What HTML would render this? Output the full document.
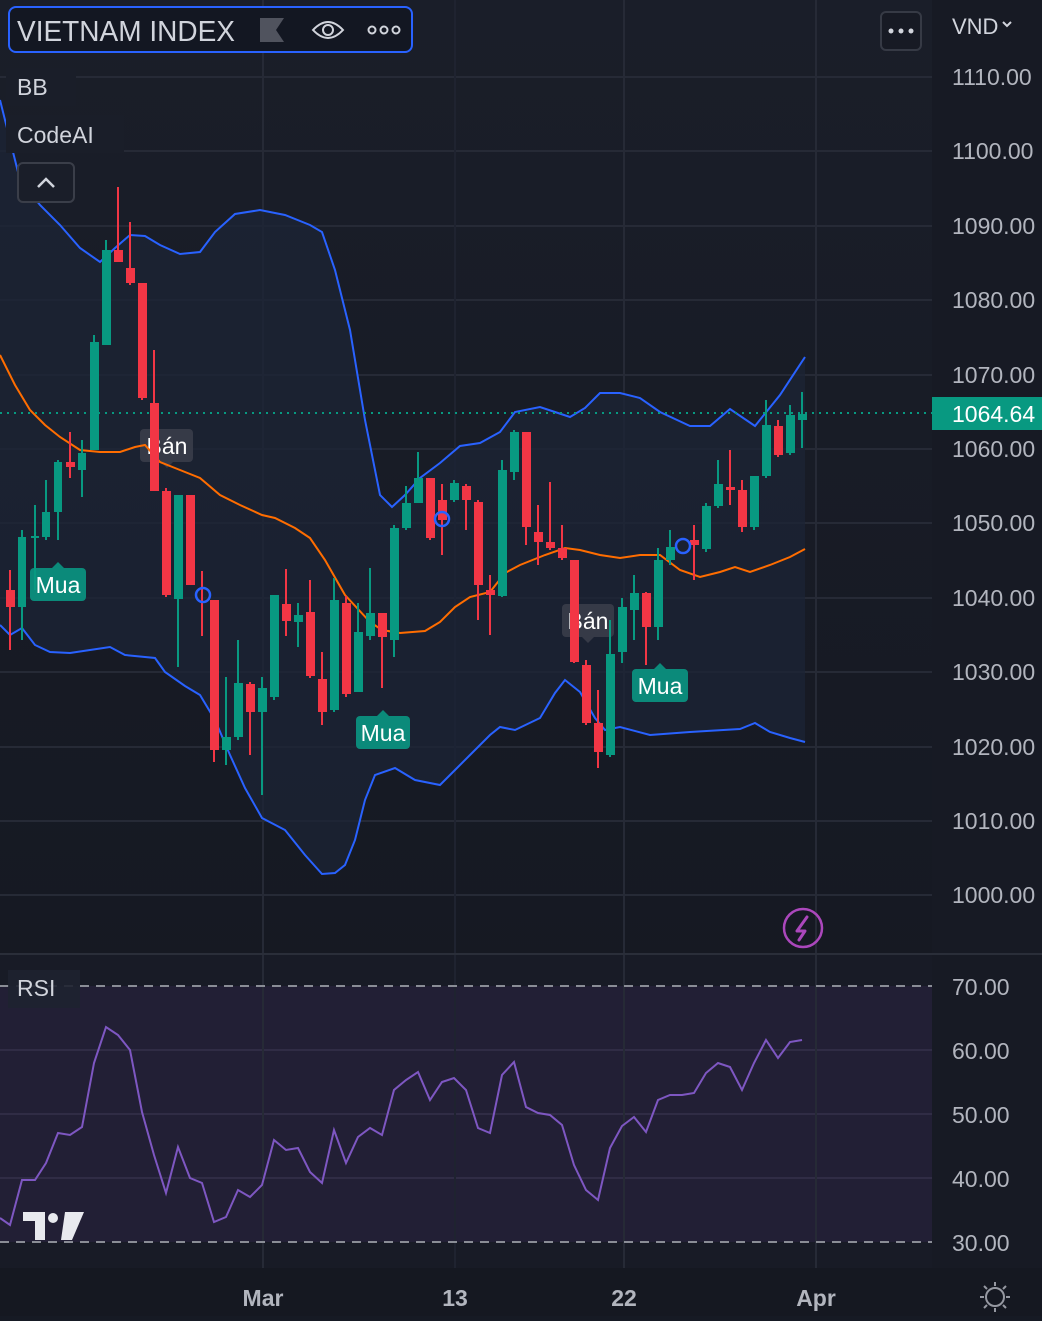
<!DOCTYPE html>
<html><head><meta charset="utf-8"><style>
html,body{margin:0;padding:0;background:#161a24;}
body{width:1042px;height:1316px;overflow:hidden;font-family:"Liberation Sans","DejaVu Sans",sans-serif;}
svg text{font-family:"Liberation Sans","DejaVu Sans",sans-serif;}
</style></head><body>
<svg width="1042" height="1316" viewBox="0 0 1042 1316" xmlns="http://www.w3.org/2000/svg">
<defs>
<linearGradient id="bg" x1="0" y1="0" x2="0" y2="1"><stop offset="0" stop-color="#1a1e29"/><stop offset="1" stop-color="#141720"/></linearGradient>
</defs>
<rect x="0" y="0" width="1042" height="1316" fill="url(#bg)"/>
<rect x="0" y="954" width="932" height="314" fill="#181b26"/>
<rect x="0" y="986" width="932" height="256" fill="#221f35"/>
<rect x="932" y="0" width="110" height="1316" fill="#171a24"/>
<rect x="0" y="1268" width="1042" height="48" fill="#151821"/>
<!-- grid -->
<g stroke="#262a36" stroke-width="2">
<line x1="0" y1="77" x2="932" y2="77"/><line x1="0" y1="151" x2="932" y2="151"/><line x1="0" y1="226" x2="932" y2="226"/><line x1="0" y1="300" x2="932" y2="300"/><line x1="0" y1="375" x2="932" y2="375"/><line x1="0" y1="449" x2="932" y2="449"/><line x1="0" y1="523" x2="932" y2="523"/><line x1="0" y1="598" x2="932" y2="598"/><line x1="0" y1="672" x2="932" y2="672"/><line x1="0" y1="747" x2="932" y2="747"/><line x1="0" y1="821" x2="932" y2="821"/><line x1="0" y1="895" x2="932" y2="895"/>
<line x1="0" y1="1050" x2="932" y2="1050" stroke="#302c45"/><line x1="0" y1="1114" x2="932" y2="1114" stroke="#302c45"/><line x1="0" y1="1178" x2="932" y2="1178" stroke="#302c45"/>
<line x1="263" y1="0" x2="263" y2="1268"/><line x1="455" y1="0" x2="455" y2="1268" stroke="#1f2330"/><line x1="624" y1="0" x2="624" y2="1268"/><line x1="816" y1="0" x2="816" y2="1268"/>
</g>
<line x1="0" y1="954" x2="1042" y2="954" stroke="#2a2e39" stroke-width="2"/>
<!-- BB fill -->
<polygon fill="#1c2436" opacity="0.75" points="0,100 20,180 40,205 60,225 80,248 100,262 115,248 130,235 145,236 160,245 180,254 200,252 215,232 235,214 260,210 285,215 310,225 322,232 335,270 350,330 365,420 380,495 392,507 405,495 420,478 440,463 460,446 480,443 500,432 515,412 540,407 555,412 570,417 585,408 600,393 620,393 640,398 660,412 690,426 710,426 730,409 755,426 780,395 805,357 805,742 790,738 770,732 755,723 740,729 690,732 650,735 620,727 605,730 595,718 580,692 565,680 555,693 540,718 515,730 500,727 490,735 470,755 455,770 440,785 415,780 395,768 375,775 365,800 355,840 345,865 335,873 322,874 305,855 285,830 262,818 245,788 230,755 215,720 200,695 185,686 165,672 155,658 125,655 110,647 90,650 70,653 50,652 35,645 22,628 10,635 0,625"/>
<!-- labels under candles -->
<g font-size="23" >
<rect x="30" y="568" width="56" height="33" rx="4" fill="#0b8a7a"/><polygon points="52,568 58,562 64,568" fill="#0b8a7a"/><text x="58" y="593" fill="#fff" text-anchor="middle">Mua</text>
<rect x="356" y="716" width="54" height="33" rx="4" fill="#0b8a7a"/><polygon points="377,716 383,710 389,716" fill="#0b8a7a"/><text x="383" y="741" fill="#fff" text-anchor="middle">Mua</text>
<rect x="632" y="669" width="56" height="33" rx="4" fill="#0b8a7a"/><polygon points="654,669 660,663 666,669" fill="#0b8a7a"/><text x="660" y="694" fill="#fff" text-anchor="middle">Mua</text>
<rect x="140" y="429" width="53" height="33" rx="4" fill="#363a47"/><polygon points="161,462 167,468 173,462" fill="#363a47"/><text x="167" y="454" fill="#fff" text-anchor="middle">Bán</text>
<rect x="562" y="604" width="52" height="33" rx="4" fill="#363a47"/><polygon points="582,637 588,643 594,637" fill="#363a47"/><text x="588" y="629" fill="#fff" text-anchor="middle">Bán</text>
</g>
<!-- BB lines -->
<polyline fill="none" stroke="#2962ff" stroke-width="2" points="0,100 20,180 40,205 60,225 80,248 100,262 115,248 130,235 145,236 160,245 180,254 200,252 215,232 235,214 260,210 285,215 310,225 322,232 335,270 350,330 365,420 380,495 392,507 405,495 420,478 440,463 460,446 480,443 500,432 515,412 540,407 555,412 570,417 585,408 600,393 620,393 640,398 660,412 690,426 710,426 730,409 755,426 780,395 805,357"/>
<polyline fill="none" stroke="#2962ff" stroke-width="2" points="0,625 10,635 22,628 35,645 50,652 70,653 90,650 110,647 125,655 155,658 165,672 185,686 200,695 215,720 230,755 245,788 262,818 285,830 305,855 322,874 335,873 345,865 355,840 365,800 375,775 395,768 415,780 440,785 455,770 470,755 490,735 500,727 515,730 540,718 555,693 565,680 580,692 595,718 605,730 620,727 650,735 690,732 740,729 755,723 770,732 790,738 805,742"/>
<polyline fill="none" stroke="#ff6d00" stroke-width="2" points="0,355 15,385 30,410 45,425 60,437 80,450 100,452 120,452 135,447 145,445 160,462 180,470 200,478 220,495 240,505 262,515 275,518 295,528 310,538 325,560 345,595 370,622 382,630 400,633 425,631 440,622 455,607 470,597 490,592 505,573 520,565 545,555 565,548 580,550 600,555 620,558 640,555 660,555 680,570 700,577 720,572 735,567 750,572 770,565 790,557 805,549"/>
<line x1="0" y1="413" x2="932" y2="413" stroke="#089981" stroke-width="2" stroke-dasharray="2,5"/>
<!-- green candles -->
<g fill="#089981" stroke="#089981" stroke-width="2">
<line x1="22" y1="530" x2="22" y2="640"/><rect x="18" y="537" width="8" height="70" stroke="none"/>
<line x1="35" y1="505" x2="35" y2="590"/><rect x="31" y="536" width="8" height="2" stroke="none"/>
<line x1="46" y1="480" x2="46" y2="540"/><rect x="42" y="512" width="8" height="25" stroke="none"/>
<line x1="58" y1="460" x2="58" y2="540"/><rect x="54" y="462" width="8" height="50" stroke="none"/>
<line x1="82" y1="440" x2="82" y2="497"/><rect x="78" y="453" width="8" height="17" stroke="none"/>
<line x1="94" y1="335" x2="94" y2="450"/><rect x="90" y="342" width="9" height="108" stroke="none"/>
<line x1="106" y1="240" x2="106" y2="345"/><rect x="102" y="250" width="9" height="95" stroke="none"/>
<line x1="178" y1="495" x2="178" y2="667"/><rect x="174" y="495" width="9" height="104" stroke="none"/>
<line x1="226" y1="677" x2="226" y2="765"/><rect x="222" y="737" width="9" height="13" stroke="none"/>
<line x1="238" y1="640" x2="238" y2="740"/><rect x="234" y="683" width="9" height="54" stroke="none"/>
<line x1="262" y1="677" x2="262" y2="795"/><rect x="258" y="688" width="9" height="24" stroke="none"/>
<line x1="274" y1="595" x2="274" y2="700"/><rect x="270" y="595" width="9" height="102" stroke="none"/>
<line x1="298" y1="603" x2="298" y2="647"/><rect x="294" y="615" width="9" height="7" stroke="none"/>
<line x1="334" y1="578" x2="334" y2="712"/><rect x="330" y="600" width="9" height="110" stroke="none"/>
<line x1="358" y1="603" x2="358" y2="692"/><rect x="354" y="632" width="9" height="60" stroke="none"/>
<line x1="370" y1="568" x2="370" y2="640"/><rect x="366" y="613" width="9" height="23" stroke="none"/>
<line x1="394" y1="525" x2="394" y2="657"/><rect x="390" y="528" width="9" height="112" stroke="none"/>
<line x1="406" y1="486" x2="406" y2="530"/><rect x="402" y="503" width="9" height="25" stroke="none"/>
<line x1="418" y1="452" x2="418" y2="503"/><rect x="414" y="478" width="9" height="25" stroke="none"/>
<line x1="454" y1="480" x2="454" y2="502"/><rect x="450" y="483" width="9" height="17" stroke="none"/>
<line x1="502" y1="460" x2="502" y2="597"/><rect x="498" y="470" width="9" height="126" stroke="none"/>
<line x1="514" y1="430" x2="514" y2="480"/><rect x="510" y="432" width="9" height="40" stroke="none"/>
<line x1="610" y1="620" x2="610" y2="757"/><rect x="606" y="654" width="9" height="101" stroke="none"/>
<line x1="622" y1="598" x2="622" y2="663"/><rect x="618" y="607" width="9" height="45" stroke="none"/>
<line x1="634" y1="575" x2="634" y2="640"/><rect x="630" y="593" width="9" height="17" stroke="none"/>
<line x1="658" y1="548" x2="658" y2="640"/><rect x="654" y="560" width="9" height="67" stroke="none"/>
<line x1="670" y1="530" x2="670" y2="565"/><rect x="666" y="547" width="9" height="13" stroke="none"/>
<line x1="706" y1="503" x2="706" y2="552"/><rect x="702" y="506" width="9" height="43" stroke="none"/>
<line x1="718" y1="460" x2="718" y2="508"/><rect x="714" y="484" width="9" height="22" stroke="none"/>
<line x1="754" y1="476" x2="754" y2="530"/><rect x="750" y="476" width="9" height="51" stroke="none"/>
<line x1="766" y1="400" x2="766" y2="478"/><rect x="762" y="425" width="9" height="51" stroke="none"/>
<line x1="790" y1="405" x2="790" y2="455"/><rect x="786" y="415" width="9" height="38" stroke="none"/>
<line x1="802" y1="392" x2="802" y2="448"/><rect x="798" y="414" width="9" height="6" stroke="none"/>
</g>
<!-- red candles -->
<g fill="#f23645" stroke="#f23645" stroke-width="2">
<line x1="10" y1="570" x2="10" y2="650"/><rect x="6" y="590" width="9" height="17" stroke="none"/>
<line x1="70" y1="432" x2="70" y2="478"/><rect x="66" y="462" width="9" height="5" stroke="none"/>
<line x1="118" y1="187" x2="118" y2="262"/><rect x="114" y="250" width="9" height="12" stroke="none"/>
<line x1="130" y1="222" x2="130" y2="285"/><rect x="126" y="268" width="9" height="15" stroke="none"/>
<line x1="142" y1="283" x2="142" y2="400"/><rect x="138" y="283" width="9" height="115" stroke="none"/>
<line x1="154" y1="350" x2="154" y2="491"/><rect x="150" y="403" width="9" height="88" stroke="none"/>
<line x1="166" y1="488" x2="166" y2="597"/><rect x="162" y="491" width="9" height="104" stroke="none"/>
<line x1="190" y1="495" x2="190" y2="585"/><rect x="186" y="495" width="9" height="90" stroke="none"/>
<line x1="202" y1="571" x2="202" y2="636"/>
<line x1="214" y1="600" x2="214" y2="762"/><rect x="210" y="600" width="9" height="150" stroke="none"/>
<line x1="250" y1="682" x2="250" y2="755"/><rect x="246" y="684" width="9" height="28" stroke="none"/>
<line x1="286" y1="569" x2="286" y2="636"/><rect x="282" y="604" width="9" height="17" stroke="none"/>
<line x1="310" y1="580" x2="310" y2="678"/><rect x="306" y="612" width="9" height="64" stroke="none"/>
<line x1="322" y1="652" x2="322" y2="725"/><rect x="318" y="679" width="9" height="33" stroke="none"/>
<line x1="346" y1="596" x2="346" y2="697"/><rect x="342" y="603" width="9" height="91" stroke="none"/>
<line x1="382" y1="613" x2="382" y2="688"/><rect x="378" y="613" width="9" height="24" stroke="none"/>
<line x1="430" y1="478" x2="430" y2="540"/><rect x="426" y="478" width="9" height="60" stroke="none"/>
<line x1="442" y1="484" x2="442" y2="555"/><rect x="438" y="500" width="9" height="20" stroke="none"/>
<line x1="466" y1="484" x2="466" y2="530"/><rect x="462" y="486" width="9" height="14" stroke="none"/>
<line x1="478" y1="500" x2="478" y2="620"/><rect x="474" y="502" width="9" height="83" stroke="none"/>
<line x1="490" y1="575" x2="490" y2="635"/><rect x="486" y="590" width="9" height="5" stroke="none"/>
<line x1="526" y1="432" x2="526" y2="545"/><rect x="522" y="432" width="9" height="95" stroke="none"/>
<line x1="538" y1="505" x2="538" y2="565"/><rect x="534" y="532" width="9" height="10" stroke="none"/>
<line x1="550" y1="482" x2="550" y2="550"/><rect x="546" y="542" width="9" height="6" stroke="none"/>
<line x1="562" y1="525" x2="562" y2="560"/><rect x="558" y="548" width="9" height="10" stroke="none"/>
<line x1="574" y1="560" x2="574" y2="663"/><rect x="570" y="560" width="9" height="102" stroke="none"/>
<line x1="586" y1="660" x2="586" y2="725"/><rect x="582" y="665" width="9" height="58" stroke="none"/>
<line x1="598" y1="690" x2="598" y2="768"/><rect x="594" y="723" width="9" height="29" stroke="none"/>
<line x1="646" y1="592" x2="646" y2="665"/><rect x="642" y="593" width="9" height="34" stroke="none"/>
<line x1="694" y1="525" x2="694" y2="580"/><rect x="690" y="540" width="9" height="5" stroke="none"/>
<line x1="730" y1="450" x2="730" y2="505"/><rect x="726" y="487" width="9" height="3" stroke="none"/>
<line x1="742" y1="480" x2="742" y2="532"/><rect x="738" y="490" width="9" height="37" stroke="none"/>
<line x1="778" y1="420" x2="778" y2="457"/><rect x="774" y="426" width="9" height="29" stroke="none"/>
</g>
<g fill="none" stroke="#2962ff" stroke-width="2.5">
<circle cx="203" cy="595" r="7"/><circle cx="442" cy="519" r="7"/><circle cx="683" cy="546" r="7"/>
</g>
<!-- lightning -->
<circle cx="803" cy="928" r="19" fill="none" stroke="#ab47bc" stroke-width="2.5"/>
<path d="M807,917 L797,931 L805,931 L799,940" fill="none" stroke="#ab47bc" stroke-width="3" stroke-linecap="round" stroke-linejoin="round"/>
<!-- RSI -->
<line x1="0" y1="986" x2="932" y2="986" stroke="#8a8d96" stroke-width="2" stroke-dasharray="9,7"/>
<line x1="0" y1="1242" x2="932" y2="1242" stroke="#8a8d96" stroke-width="2" stroke-dasharray="9,7"/>
<polyline fill="none" stroke="#7e57c2" stroke-width="2" points="0,1218 10,1225 22,1180 35,1180 46,1163 58,1133 70,1135 82,1127 94,1063 106,1027 118,1035 130,1050 142,1112 154,1155 166,1193 178,1147 190,1178 202,1183 214,1222 226,1217 238,1190 250,1197 262,1185 274,1140 286,1150 298,1148 310,1172 322,1183 334,1130 346,1163 358,1137 370,1128 382,1135 394,1090 406,1080 418,1072 430,1100 442,1082 454,1078 466,1090 478,1128 490,1133 502,1075 514,1062 526,1107 538,1113 550,1115 562,1125 574,1165 586,1190 598,1200 610,1148 622,1126 634,1117 646,1132 658,1100 670,1095 682,1095 694,1093 706,1073 718,1063 730,1067 742,1090 754,1063 766,1040 778,1058 790,1042 802,1040"/>
<rect x="8" y="970" width="72" height="38" fill="#1e2230" opacity="0.9"/>
<text x="17" y="996" font-size="23" fill="#d1d4dc">RSI</text>
<!-- TV logo -->
<g fill="#e8e9ee"><path d="M23,1212 H45 V1240 H35 V1221 H23 Z"/><circle cx="53" cy="1218" r="5"/><path d="M65,1212 H84 L72,1240 H61 Z"/></g>
<!-- top legend -->
<rect x="9" y="7" width="403" height="45" rx="7" fill="#131722" stroke="#2962ff" stroke-width="2"/>
<text x="17" y="41" font-size="29" fill="#d1d4dc" textLength="218" lengthAdjust="spacingAndGlyphs">VIETNAM INDEX</text>
<path d="M260,18 H284 L276,30 L284,42 H260 Z" fill="#50535e"/>
<path d="M313,30 Q328,14 343,30 Q328,46 313,30 Z" fill="none" stroke="#d1d4dc" stroke-width="2"/><circle cx="328" cy="30" r="5" fill="none" stroke="#d1d4dc" stroke-width="2"/>
<g fill="none" stroke="#d1d4dc" stroke-width="2"><circle cx="372" cy="30" r="3.5"/><circle cx="384" cy="30" r="3.5"/><circle cx="396" cy="30" r="3.5"/></g>
<rect x="6" y="68" width="70" height="38" fill="#1a1e29"/>
<text x="17" y="95" font-size="23" fill="#d1d4dc">BB</text>
<rect x="6" y="115" width="118" height="38" fill="#1a1e29"/>
<text x="17" y="143" font-size="23" fill="#d1d4dc">CodeAI</text>
<rect x="18" y="163" width="56" height="39" rx="5" fill="#1a1e29" stroke="#3a3e49" stroke-width="2"/>
<path d="M38,187 L46,179 L54,187" fill="none" stroke="#d1d4dc" stroke-width="2.5"/>
<rect x="881" y="12" width="40" height="38" rx="5" fill="#171a24" stroke="#363a45" stroke-width="2"/>
<g fill="#d1d4dc"><circle cx="891" cy="31" r="2.5"/><circle cx="901" cy="31" r="2.5"/><circle cx="911" cy="31" r="2.5"/></g>
<!-- price axis -->
<g font-size="23" fill="#b2b5be">
<text x="952" y="34" font-size="22" fill="#d1d4dc">VND</text><path d="M1003,22 L1007,26 L1011,22" fill="none" stroke="#d1d4dc" stroke-width="2"/>
<text x="952" y="85">1110.00</text><text x="952" y="159">1100.00</text><text x="952" y="234">1090.00</text><text x="952" y="308">1080.00</text><text x="952" y="383">1070.00</text><text x="952" y="457">1060.00</text><text x="952" y="531">1050.00</text><text x="952" y="606">1040.00</text><text x="952" y="680">1030.00</text><text x="952" y="755">1020.00</text><text x="952" y="829">1010.00</text><text x="952" y="903">1000.00</text>
<text x="952" y="995">70.00</text><text x="952" y="1059">60.00</text><text x="952" y="1123">50.00</text><text x="952" y="1187">40.00</text><text x="952" y="1251">30.00</text>
</g>
<rect x="932" y="397" width="110" height="33" fill="#089981"/>
<text x="952" y="422" font-size="23" fill="#fff">1064.64</text>
<!-- time axis -->
<g font-size="23" fill="#b2b5be" text-anchor="middle" font-weight="bold">
<text x="263" y="1306">Mar</text><text x="455" y="1306">13</text><text x="624" y="1306">22</text><text x="816" y="1306">Apr</text>
</g>
<g stroke="#9598a1" stroke-width="2" fill="none"><circle cx="995" cy="1297" r="9"/><line x1="995" y1="1282" x2="995" y2="1286"/><line x1="995" y1="1308" x2="995" y2="1312"/><line x1="980" y1="1297" x2="984" y2="1297"/><line x1="1006" y1="1297" x2="1010" y2="1297"/><line x1="984" y1="1286" x2="987" y2="1289"/><line x1="1006" y1="1286" x2="1003" y2="1289"/><line x1="984" y1="1308" x2="987" y2="1305"/><line x1="1006" y1="1308" x2="1003" y2="1305"/></g>
</svg>
</body></html>
